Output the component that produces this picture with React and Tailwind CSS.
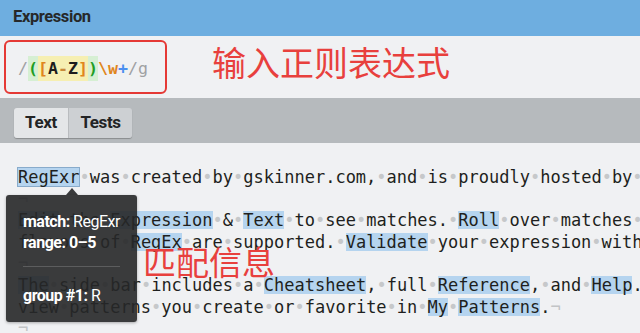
import React from 'react';

const lines = [
  { text: 'RegExr was created by gskinner.com, and is proudly hosted by Media Temple.', eol: true },
  { text: '', eol: true },
  { text: 'Edit the Expression & Text to see matches. Roll over matches or the expression for details. PCRE & JavaScript', eol: false },
  { text: 'flavors of RegEx are supported. Validate your expression with Tests mode.', eol: true },
  { text: '', eol: true },
  { text: 'The side bar includes a Cheatsheet, full Reference, and Help. You can also Save & Share with the Community, and', eol: false },
  { text: 'view patterns you create or favorite in My Patterns.', eol: true },
  { text: '', eol: true },
];

const Dot = () => <span className="text-[#c6c8ca]">•</span>;

const Line = ({ text, eol, first }) => {
  const parts = text.split(/([A-Z]\w+| )/).filter((p) => p !== '');
  let seen = false;
  return (
    <div className="h-[21.6px]">
      {parts.map((p, i) => {
        if (p === ' ') return <Dot key={i} />;
        if (/^[A-Z]\w+$/.test(p)) {
          const hover = first && !seen;
          seen = true;
          return (
            <span
              key={i}
              className={`inline-block leading-[18px] bg-[#b5d4ef] ${hover ? 'shadow-[0_0_0_1px_#88abcb]' : ''}`}
            >
              {p}
            </span>
          );
        }
        return <span key={i}>{p}</span>;
      })}
      {eol && <span className="text-[#c2c4c6]">¬</span>}
    </div>
  );
};

export default function App() {
  return (
    <div className="relative w-[640px] h-[333px] overflow-hidden bg-[#f0f1f3] flex flex-col font-['Roboto',sans-serif]">
      <div className="h-[36px] shrink-0 bg-[#6eaee0] flex items-center px-[13px] pb-[2px] text-[16.5px] font-bold tracking-[-0.4px] text-[#262829]">
        Expression
      </div>

      <div className="h-[62px] shrink-0 flex items-start">
        <div className="ml-[4px] mt-[4px] w-[163px] h-[54px] border-2 border-[#e53935] rounded-[6px] flex items-center pl-[12px] pt-[3px]">
          <span className="font-['DejaVu_Sans_Mono',monospace] text-[16.6px] font-bold leading-[25px] whitespace-pre">
            <span className="text-[#9fa1a3] font-normal">/</span>
            <span className="bg-[#d6efd3] inline-block">
              <span className="text-[#1f9d25]">(</span>
              <span className="bg-[#f6efb2] inline-block">
                <span className="text-[#e0861c]">[</span>
                <span className="text-[#1d1d1d]">A</span>
                <span className="text-[#c98a3a]">-</span>
                <span className="text-[#1d1d1d]">Z</span>
                <span className="text-[#e0861c]">]</span>
              </span>
              <span className="text-[#1f9d25]">)</span>
            </span>
            <span className="text-[#e0861c]">\w</span>
            <span className="text-[#4b8ff0]">+</span>
            <span className="text-[#9fa1a3] font-normal">/g</span>
          </span>
        </div>
        <div className="ml-[45px] mt-[9px] text-[34px] leading-none text-[#e8403d] font-['Noto_Sans_CJK_SC',sans-serif]">
          输入正则表达式
        </div>
      </div>

      <div className="h-[45px] shrink-0 bg-[#b6babd] pt-[10px] pl-[14px] flex items-start">
        <div className="flex rounded-[3px] overflow-hidden shadow-[0_1px_1px_rgba(0,0,0,0.25)] text-[17px] font-bold tracking-[-0.4px] text-[#232425]">
          <div className="w-[55px] h-[30px] bg-[#e4e6e8] flex items-center justify-center border-r border-[#b9bcbf]">
            Text
          </div>
          <div className="w-[63px] h-[30px] bg-[#cdd0d3] flex items-center justify-center">Tests</div>
        </div>
      </div>

      <div className="flex-1 overflow-hidden pl-[18px] pt-[24px] whitespace-pre font-['DejaVu_Sans_Mono',monospace] text-[17px] leading-[21.6px] text-[#1e1f20]">
        {lines.map((l, i) => (
          <Line key={i} text={l.text} eol={l.eol} first={i === 0} />
        ))}
      </div>

      <div className="absolute left-[66px] top-[188px] w-0 h-0 border-l-[6px] border-r-[6px] border-b-[7px] border-l-transparent border-r-transparent border-b-[rgba(38,39,40,0.9)]" />
      <div className="absolute left-[6px] top-[195px] w-[131px] h-[127px] rounded-[3px] bg-[rgba(38,39,40,0.9)] shadow-[0_1px_3px_rgba(0,0,0,0.3)] px-[17px] pt-[16px] text-white text-[16px] leading-[21px] tracking-[-0.5px]">
        <div>
          <span className="font-bold">match:</span> RegExr
        </div>
        <div className="font-bold">range: 0–5</div>
        <div className="mt-[13px] h-px bg-[#5c5d5e]" />
        <div className="mt-[18px]">
          <span className="font-bold">group #1:</span> R
        </div>
      </div>

      <div className="absolute left-[143px] top-[245px] text-[33px] leading-none text-[#e8403d] font-['Noto_Sans_CJK_SC',sans-serif]">
        匹配信息
      </div>
    </div>
  );
}
